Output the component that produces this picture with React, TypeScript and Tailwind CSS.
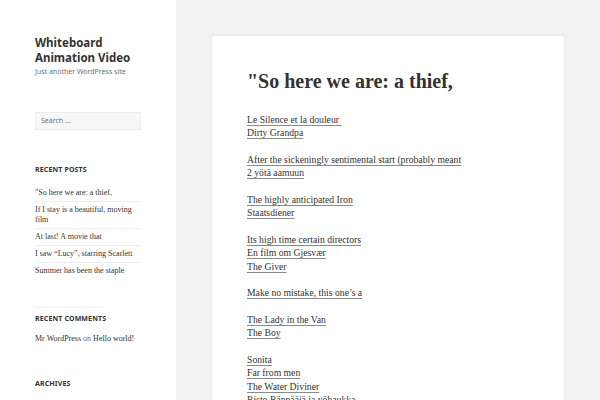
const serif = "font-['Liberation_Serif',serif]";
const sans = "font-['Noto_Sans',sans-serif]";

const posts = [
  "\"So here we are: a thief,",
  "If I stay is a beautiful, moving film",
  "At last! A movie that",
  "I saw \u201cLucy\u201d, starring Scarlett",
  "Summer has been the staple",
];

const paragraphs: string[][] = [
  ["Le Silence et la douleur\u00a0", "Dirty Grandpa"],
  ["After the sickeningly sentimental start (probably meant", "2 yötä aamuun"],
  ["The highly anticipated Iron", "Staatsdiener"],
  ["Its high time certain directors", "En film om Gjesvær", "The Giver"],
  ["Make no mistake, this one\u2019s a"],
  ["The Lady in the Van", "The Boy"],
  ["Sonita", "Far from men", "The Water Diviner", "Risto Räppääjä ja yöhaukka"],
];

function WidgetTitle({ children }: { children: string }) {
  return (
    <h2 className={`${sans} text-[7px] font-bold uppercase leading-[10px] tracking-[0.02em] text-[#333]`}>{children}</h2>
  );
}

function Sidebar() {
  return (
    <aside className="w-[176px] shrink-0 bg-white px-[35px] pt-[35px]">
      <h1 className={`${sans} text-[11.5px] font-bold leading-[15px] text-[#333]`}>Whiteboard Animation Video</h1>
      <p className={`${sans} mt-[2px] text-[7px] leading-[10px] text-[#707070]`}>Just another WordPress site</p>

      <div className={`${sans} mt-[35px] flex h-[18px] items-center border border-[#ececec] bg-[#f7f7f7] px-[5px] text-[7px] text-[#707070]`}>
        Search …
      </div>

      <div className="mt-[35px]">
        <WidgetTitle>Recent Posts</WidgetTitle>
        <ul className={`${serif} mt-[10px] text-[8px] leading-[10px] text-[#333]`}>
          {posts.map((p, i) => (
            <li key={p} className={`py-[3px] ${i > 0 ? "border-t border-[#eeeeee]" : ""}`}>{p}</li>
          ))}
        </ul>
      </div>

      <div className="mt-[28px] w-[70px] border-t border-[#f0f0f0]" />

      <div className="mt-[6px]">
        <WidgetTitle>Recent Comments</WidgetTitle>
        <p className={`${serif} mt-[10px] text-[8px] leading-[10px] text-[#333]`}>
          Mr WordPress <span className="text-[#707070]">on</span> Hello world!
        </p>
      </div>

      <div className="mt-[35px]">
        <WidgetTitle>Archives</WidgetTitle>
      </div>
    </aside>
  );
}

export default function App() {
  return (
    <div className="flex h-[400px] w-[600px] overflow-hidden bg-[#f1f1f1]">
      <Sidebar />
      <main className="flex-1 pl-[36px] pt-[36px]">
        <article className="w-[352px] rounded-[2px] bg-white px-[35px] pt-[32px] pb-[40px] shadow-[0_0_1px_rgba(0,0,0,0.12)]">
          <h2 className={`${serif} text-[20px] font-bold leading-[26px] text-[#333]`}>"So here we are: a thief,</h2>
          <div className={`${serif} mt-[19px] text-[9.7px] leading-[13.33px] text-[#333]`}>
            {paragraphs.map((lines, i) => (
              <p key={i} className="mb-[13.33px]">
                {lines.map((l) => (
                  <span key={l} className="block">
                    <a className="underline decoration-[#8a8a8a] underline-offset-2">{l}</a>
                  </span>
                ))}
              </p>
            ))}
          </div>
        </article>
      </main>
    </div>
  );
}
